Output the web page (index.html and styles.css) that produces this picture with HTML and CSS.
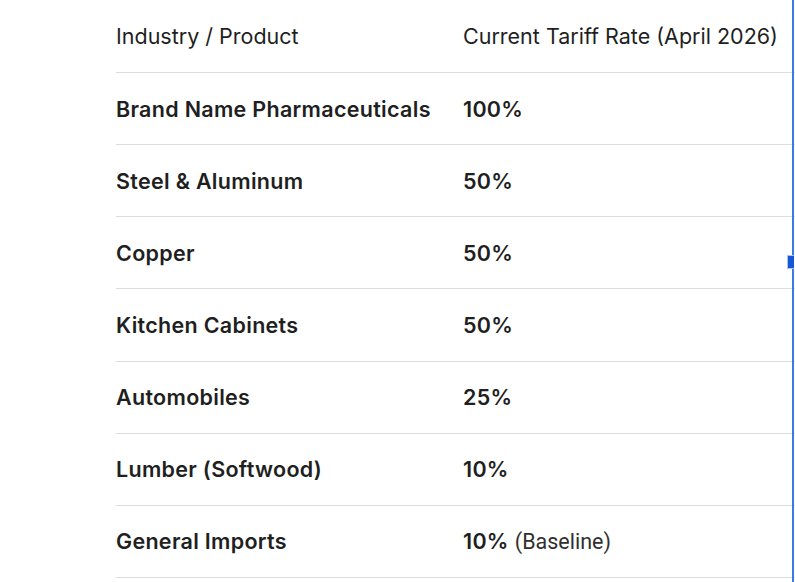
FILE: index.html
```html
<!DOCTYPE html>
<html lang="en">
<head>
<meta charset="utf-8">
<title>Tariff rates</title>
<link rel="stylesheet" href="styles.css">
</head>
<body>
<div class="page">
  <table class="rates">
    <thead>
      <tr><th class="c1">Industry / Product</th><th class="c2">Current Tariff Rate (April 2026)</th></tr>
    </thead>
    <tbody>
      <tr><td class="c1"><b>Brand Name Pharmaceuticals</b></td><td class="c2"><b>100%</b></td></tr>
      <tr><td class="c1"><b>Steel &amp; Aluminum</b></td><td class="c2"><b>50%</b></td></tr>
      <tr><td class="c1"><b>Copper</b></td><td class="c2"><b>50%</b></td></tr>
      <tr><td class="c1"><b>Kitchen Cabinets</b></td><td class="c2"><b>50%</b></td></tr>
      <tr><td class="c1"><b>Automobiles</b></td><td class="c2"><b>25%</b></td></tr>
      <tr><td class="c1"><b>Lumber (Softwood)</b></td><td class="c2"><b>10%</b></td></tr>
      <tr><td class="c1"><b>General Imports</b></td><td class="c2"><b>10%</b> <span class="note">(Baseline)</span></td></tr>
    </tbody>
  </table>
  <div class="edge"></div>
  <div class="handle"></div>
</div>
</body>
</html>
```
FILE: styles.css
```css
html, body {
  margin: 0;
  padding: 0;
  background: #ffffff;
  overflow: hidden;
}
.page {
  width: 795px;
  height: 582px;
  position: relative;
  overflow: hidden;
  font-family: "Inter", "Roboto", "Liberation Sans", sans-serif;
  color: #1f1f1f;
}
.rates {
  margin-left: 116px;
  border-collapse: collapse;
  width: 720px;
  table-layout: fixed;
}
.rates th, .rates td {
  text-align: left;
  padding: 0;
  font-size: 21.5px;
  border-bottom: 1px solid #dcdcdc;
  vertical-align: middle;
  white-space: nowrap;
}
.rates th {
  font-weight: 400;
  height: 72px;
}
.rates td {
  height: 71.14px;
}
.rates b {
  font-weight: 600;
  letter-spacing: 0.3px;
}
.rates .c1 {
  width: 347px;
}
.note {
  font-family: "Roboto", "Liberation Sans", sans-serif;
  font-weight: 400;
  color: #303030;
}
.edge {
  position: absolute;
  left: 792px;
  top: 0;
  width: 2px;
  height: 582px;
  background: #3a7be8;
}
.handle {
  position: absolute;
  left: 787px;
  top: 255px;
  width: 6px;
  height: 12px;
  background: #1558d6;
  border: 1px solid #a8c4f0;
  border-right: none;
}
```
